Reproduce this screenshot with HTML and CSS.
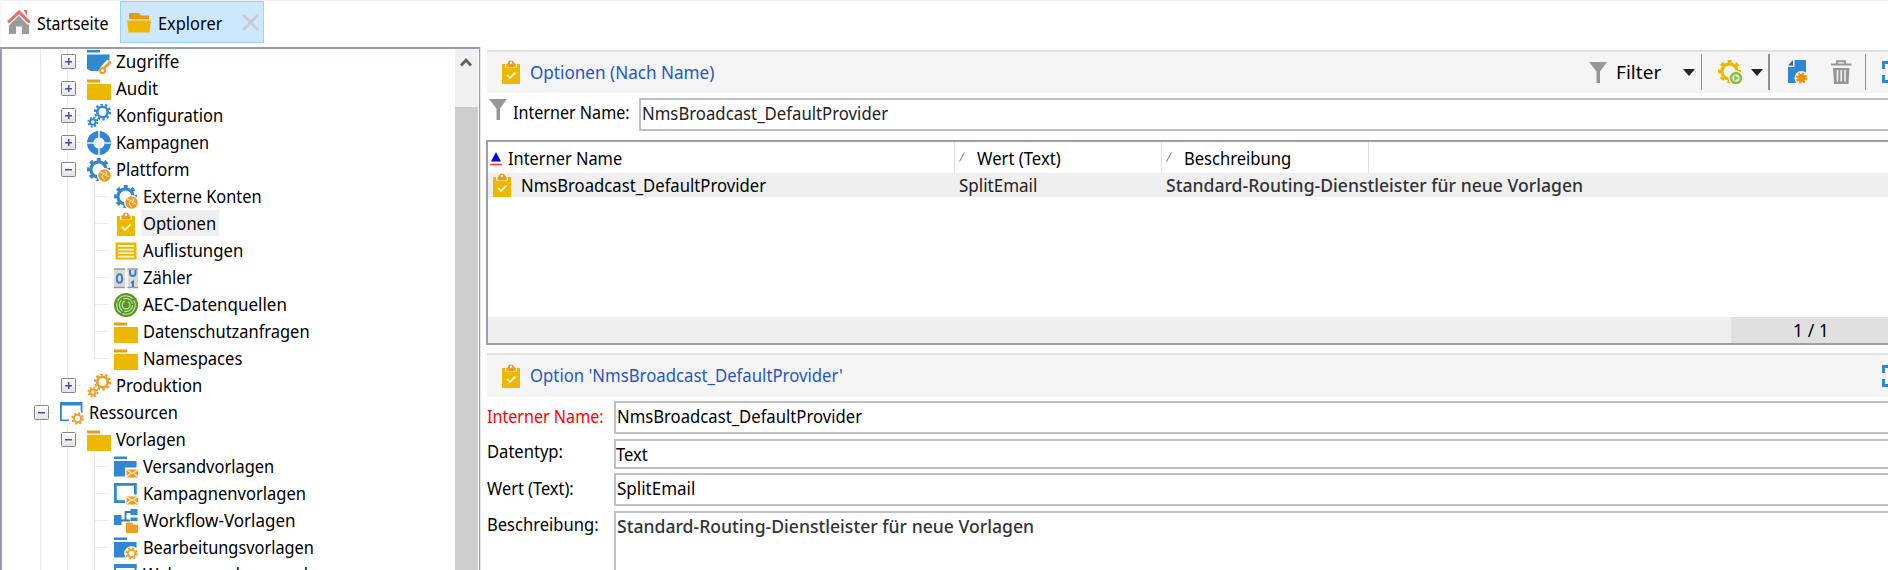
FILE: index.html
```html
<!DOCTYPE html>
<html lang="de">
<head>
<meta charset="utf-8">
<title>Explorer</title>
<link rel="stylesheet" href="styles.css">
</head>
<body>
<svg class="sprite" aria-hidden="true">
  <symbol id="home" viewBox="0 0 24 24"><path d="M2 14 12 4.500 22 14V24H15V16.500H9V24H2Z" fill="#9b9b9b"/><path d="M0 13 12 1.500 23 13" fill="none" stroke="#fff" stroke-width="6"/><path d="M1 12.500 12 2 22.500 12.500" fill="none" stroke="#ea6a65" stroke-width="3"/><path d="M16.500 0H20V5.500Z" fill="#ea6a65"/></symbol>
  <symbol id="open-folder" viewBox="0 0 24 24"><path d="M2 3H12L14 5.500H22V9H2Z" fill="#ee9500"/><path d="M0 10.500H24L22.500 22.500H1.500Z" fill="#edb800"/></symbol>
  <symbol id="folder" viewBox="0 0 24 24"><path d="M0 2.500H13V5.500H0Z" fill="#f09a10"/><path d="M0 7H24V23H0Z" fill="#edb900"/></symbol>
  <symbol id="blue-folder" viewBox="0 0 24 24"><path d="M0 1.500H13V4H0ZM0 6H22.500V21.500H0Z" fill="#3087d3"/></symbol>
  <symbol id="access" viewBox="0 0 24 24"><path d="M0 0H13V2.500H0ZM0 4.500H22.500V10L11 21H4L0 19Z" fill="#3087d3"/><path d="M22.500 11.500 15 20" stroke="#fff" stroke-width="6"/><path d="M24 11.500 15.500 19.500" stroke="#f09a20" stroke-width="3"/><circle cx="15.500" cy="20.500" r="2.500" fill="#fff" stroke="#f09a20" stroke-width="2"/></symbol>
  <symbol id="gears" viewBox="0 0 24 24"><g fill="none"><g class="g1"><circle cx="15.500" cy="8" r="5.200" stroke-width="2.600"/><circle cx="15.500" cy="8" r="7.500" stroke-width="2.200" stroke-dasharray="2.500 2.210" /></g><g class="g2"><circle cx="5.800" cy="18" r="2.800" stroke-width="2"/><circle cx="5.800" cy="18" r="4.600" stroke-width="1.800" stroke-dasharray="1.900 1.713"/></g></g></symbol>
  <symbol id="ring" viewBox="0 0 24 24"><circle cx="12" cy="12" r="8.800" fill="none" stroke="#3087d3" stroke-width="6.400"/><path d="M12 0V24M0 12H24" stroke="#e4eef8" stroke-width="1.600"/></symbol>
  <symbol id="gear" viewBox="0 0 24 24"><g fill="none" stroke="currentColor"><circle cx="11.500" cy="11.500" r="7.600" stroke-width="3.200"/><circle cx="11.500" cy="11.500" r="10" stroke-width="3.200" stroke-dasharray="3.900 3.954" stroke-dashoffset="2"/></g></symbol>
  <symbol id="platform" viewBox="0 0 24 24"><use href="#gear" color="#3087d3"/><circle cx="17.500" cy="17.500" r="7.500" fill="#fff"/><circle cx="17.500" cy="17.500" r="6.200" fill="#ef9a1c"/><path d="M13 14 17 15.500 15 18.500 17.500 22M18.500 13 20 15 18 17 22 19" fill="none" stroke="#fbe0b4" stroke-width="1.200"/></symbol>
  <symbol id="clipboard" viewBox="0 0 24 24"><path d="M3 4H21V24H3Z" fill="#edb900"/><path d="M6 3.500H18V7.500H6Z" fill="#fff3d0"/><path d="M7.500 7V4.500C7.500 3.500 9 3.500 9 2.500 9.500-.200 14.500-.200 15 2.500 15 3.500 16.500 3.500 16.500 4.500V7Z" fill="#ef9a1c"/><circle cx="12" cy="3" r="1.200" fill="#fff"/><path d="M8 15 11 18 16.500 12.500" fill="none" stroke="#fff3c8" stroke-width="1.800"/></symbol>
  <symbol id="list" viewBox="0 0 24 24"><path d="M1.500 3.500H22.500V20.500H1.500Z" fill="#edb900"/><path d="M4 6H20V8H4ZM4 9.700H20V11.400H4ZM4 13.200H20V15H4ZM4 16.700H20V18.500H4Z" fill="#fff6d6"/></symbol>
  <symbol id="counter" viewBox="0 0 24 24"><path d="M0 3H11V22H0ZM13.500 3H24V22H13.500Z" fill="#d9d9d9"/><path d="M0 3H11M13.500 3H24M0 21.500H11M13.500 21.500H24" stroke="#999" stroke-width="1.400"/><g fill="none" stroke="#3a7fc0" stroke-width="2"><ellipse cx="5.500" cy="12.500" rx="2.600" ry="4.300"/><path d="M16 4V7C16 11 21.500 11 21.500 7V4M17 17 19 15.700V21"/></g></symbol>
  <symbol id="aec" viewBox="0 0 24 24"><circle cx="12" cy="12" r="12" fill="#55981d"/><g fill="none" stroke="#d2e6bf" stroke-width="1.100"><circle cx="12" cy="12" r="9.300" stroke-dasharray="18 2 12 1"/><circle cx="12" cy="12" r="6.600" stroke-dasharray="12 2"/><circle cx="12" cy="12" r="3.900" stroke-dasharray="17 3"/></g></symbol>
  <symbol id="small-gear" viewBox="0 0 24 24"><circle cx="17.500" cy="17.500" r="7.300" fill="#fff"/><g fill="none" stroke="#ef9f30"><circle cx="17.500" cy="17.500" r="3.700" stroke-width="2"/><circle cx="17.500" cy="17.500" r="5.300" stroke-width="1.900" stroke-dasharray="2.200 1.963"/></g></symbol>
  <symbol id="mail" viewBox="0 0 24 24"><path d="M11 12.500H24V24H11Z" fill="#fff"/><path d="M12.500 14.500H24V22.500H12.500Z" fill="#ef9a1c"/><path d="M12.500 14.500 18.200 18.500 24 14.500M12.500 22 16.500 18.500M24 22 20 18.500" fill="none" stroke="#fff0d0" stroke-width="1.100"/></symbol>
  <symbol id="resources" viewBox="0 0 24 24"><path d="M0 1H22.500V4.500H0ZM0 4H1.800V20H0ZM0 18.500H9V20H0ZM20.700 4H22.500V13H20.700Z" fill="#3087d3"/><use href="#small-gear"/></symbol>
  <symbol id="delivery" viewBox="0 0 24 24"><use href="#blue-folder"/><use href="#mail"/></symbol>
  <symbol id="campaign" viewBox="0 0 24 24"><path d="M1.400 2.400H21.400V19.600H1.400Z" fill="none" stroke="#3087d3" stroke-width="2.800"/><use href="#mail"/></symbol>
  <symbol id="workflow" viewBox="0 0 24 24"><path d="M0 6H7.500V16H0ZM16.500 0H23.500V6H16.500ZM16.500 8.500H23.500V12H16.500Z" fill="#3087d3"/><path d="M7 11.500H16M11.500 11V3H17" fill="none" stroke="#3f78ae" stroke-width="1.800"/><path d="M12 13.500H18L19 15.500H24V24H12Z" fill="#ef9f20"/></symbol>
  <symbol id="edit" viewBox="0 0 24 24"><use href="#blue-folder"/><use href="#small-gear"/></symbol>
  <symbol id="web" viewBox="0 0 24 24"><path d="M1 2H21.500V22H1Z" fill="#fff" stroke="#3087d3" stroke-width="2"/><path d="M0 1H22.500V5H0Z" fill="#3087d3"/><circle cx="17" cy="12" r="5" fill="#e2574c"/></symbol>
  <symbol id="funnel" viewBox="0 0 18 21"><path d="M0 0H18L11 9.500V21H7.500V9.500Z" fill="#979797"/></symbol>
  <symbol id="run" viewBox="0 0 24 24"><use href="#gear" color="#edb800"/><circle cx="18" cy="18" r="7.500" fill="#f5f5f5"/><circle cx="18" cy="18" r="4.900" fill="none" stroke="#84c340" stroke-width="2.600"/><path d="M16.300 15 20.800 18 16.300 21Z" fill="#84c340"/></symbol>
  <symbol id="new" viewBox="0 0 24 24"><path d="M8.500 0H20V23H2V7H8.500Z" fill="#3087d3"/><path d="M2 5.500 7 0V5.500Z" fill="#2b68a5"/><circle cx="15.500" cy="18" r="7" fill="#f5f5f5"/><circle cx="15.500" cy="18" r="4" fill="#f09000"/><circle cx="15.500" cy="18" r="4.600" fill="none" stroke="#f09000" stroke-width="2" stroke-dasharray="2 1.613"/></symbol>
  <symbol id="trash" viewBox="0 0 24 24"><path d="M2 4.500H22.500M8 4V1.200H16V4" fill="none" stroke="#979797" stroke-width="2"/><path d="M4 8H20.500L19.500 24H5Z" fill="#979797"/><path d="M8.500 10V21.500M12.200 10V21.500M16 10V21.500" stroke="#f5f5f5" stroke-width="1.500"/></symbol>
</svg>

<header class="tabs">
  <div class="tab"><svg class="ic"><use href="#home"/></svg><span class="t" style="--s:.888">Startseite</span></div>
  <div class="tab active"><svg class="ic"><use href="#open-folder"/></svg><span class="t" style="--s:.91">Explorer</span>
    <svg class="close" viewBox="0 0 16 16"><path d="M1 1 15 15M15 1 1 15" stroke="#c9cdd0" stroke-width="2.800"/></svg></div>
</header>

<main>
<nav class="tree">
  <div class="rows">
    <div class="row"><i class="v"></i><i class="v h plus"></i><svg class="ic"><use href="#access"/></svg><span class="t" style="--s:.945">Zugriffe</span></div>
    <div class="row"><i class="v"></i><i class="v h plus"></i><svg class="ic"><use href="#folder"/></svg><span class="t" style="--s:.94">Audit</span></div>
    <div class="row"><i class="v"></i><i class="v h plus"></i><svg class="ic blue"><use href="#gears"/></svg><span class="t">Konfiguration</span></div>
    <div class="row"><i class="v"></i><i class="v h plus"></i><svg class="ic"><use href="#ring"/></svg><span class="t" style="--s:.905">Kampagnen</span></div>
    <div class="row"><i class="v"></i><i class="v h minus"></i><svg class="ic"><use href="#platform"/></svg><span class="t">Plattform</span></div>
    <div class="row"><i class="v"></i><i class="v"></i><i class="v h"></i><svg class="ic"><use href="#platform"/></svg><span class="t" style="--s:.908">Externe Konten</span></div>
    <div class="row sel"><i class="v"></i><i class="v"></i><i class="v h"></i><svg class="ic"><use href="#clipboard"/></svg><span class="t">Optionen</span></div>
    <div class="row"><i class="v"></i><i class="v"></i><i class="v h"></i><svg class="ic"><use href="#list"/></svg><span class="t" style="--s:.93">Auflistungen</span></div>
    <div class="row"><i class="v"></i><i class="v"></i><i class="v h"></i><svg class="ic"><use href="#counter"/></svg><span class="t">Zähler</span></div>
    <div class="row"><i class="v"></i><i class="v"></i><i class="v h"></i><svg class="ic"><use href="#aec"/></svg><span class="t" style="--s:.943">AEC-Datenquellen</span></div>
    <div class="row"><i class="v"></i><i class="v"></i><i class="v h"></i><svg class="ic"><use href="#folder"/></svg><span class="t" style="--s:.913">Datenschutzanfragen</span></div>
    <div class="row"><i class="v"></i><i class="v"></i><i class="v h last"></i><svg class="ic"><use href="#folder"/></svg><span class="t">Namespaces</span></div>
    <div class="row"><i class="v"></i><i class="v h plus last"></i><svg class="ic orange"><use href="#gears"/></svg><span class="t">Produktion</span></div>
    <div class="row"><i class="v h minus"></i><svg class="ic"><use href="#resources"/></svg><span class="t" style="--s:.91">Ressourcen</span></div>
    <div class="row"><i class="v"></i><i class="v h minus"></i><svg class="ic"><use href="#folder"/></svg><span class="t">Vorlagen</span></div>
    <div class="row"><i class="v"></i><i class="v"></i><i class="v h"></i><svg class="ic"><use href="#delivery"/></svg><span class="t" style="--s:.915">Versandvorlagen</span></div>
    <div class="row"><i class="v"></i><i class="v"></i><i class="v h"></i><svg class="ic"><use href="#campaign"/></svg><span class="t">Kampagnenvorlagen</span></div>
    <div class="row"><i class="v"></i><i class="v"></i><i class="v h"></i><svg class="ic"><use href="#workflow"/></svg><span class="t" style="--s:.945">Workflow-Vorlagen</span></div>
    <div class="row"><i class="v"></i><i class="v"></i><i class="v h"></i><svg class="ic"><use href="#edit"/></svg><span class="t" style="--s:.908">Bearbeitungsvorlagen</span></div>
    <div class="row"><i class="v"></i><i class="v"></i><i class="v h"></i><svg class="ic"><use href="#web"/></svg><span class="t">Webanwendungsvorl.</span></div>
  </div>
  <div class="scroll"><svg class="up" viewBox="0 0 12 9"><path d="M1 8 6 2.500 11 8" fill="none" stroke="#606060" stroke-width="2.800"/></svg><div class="thumb"></div></div>
</nav>

<section class="content">
  <div class="bar">
    <svg class="ic"><use href="#clipboard"/></svg><span class="t title" style="--s:.95">Optionen (Nach Name)</span>
    <div class="tools">
      <svg class="funnel"><use href="#funnel"/></svg><span class="t filter" style="--s:1.06">Filter</span><b class="caret c1"></b><b class="sep s1"></b>
      <svg class="ic run"><use href="#run"/></svg><b class="caret c2"></b><b class="sep s2"></b>
      <svg class="ic new"><use href="#new"/></svg><svg class="ic trash"><use href="#trash"/></svg><b class="sep s3"></b><b class="max"></b>
    </div>
  </div>
  <div class="search">
    <svg class="funnel"><use href="#funnel"/></svg><span class="t lbl" style="--s:.895">Interner Name:</span>
    <div class="field"><span class="t soft" style="--s:.93">NmsBroadcast_DefaultProvider</span></div>
  </div>
  <div class="table">
    <div class="thead">
      <div class="th c-name"><svg class="sort" viewBox="0 0 12 14"><path d="M6 0 11 9.500H1Z" fill="#00f"/><path d="M0 12.500H12" stroke="#f33" stroke-width="1.500"/></svg><span class="t" style="--s:.91">Interner Name</span></div>
      <div class="th c-val"><svg class="slash" viewBox="0 0 6 10"><path d="M.500 9.500 5.500.500" stroke="#777"/></svg><span class="t" style="--s:.925">Wert (Text)</span></div>
      <div class="th c-val"><svg class="slash" viewBox="0 0 6 10"><path d="M.500 9.500 5.500.500" stroke="#777"/></svg><span class="t">Beschreibung</span></div>
    </div>
    <div class="tr">
      <div class="td c-name"><svg class="ic"><use href="#clipboard"/></svg><span class="t" style="--s:.926">NmsBroadcast_DefaultProvider</span></div>
      <div class="td c-val"><span class="t soft" style="--s:.945">SplitEmail</span></div>
      <div class="td"><span class="t desc">Standard-Routing-Dienstleister für neue Vorlagen</span></div>
    </div>
    <div class="tfoot"><div class="count"><span class="t" style="--s:.98">1 / 1</span></div></div>
  </div>
  <div class="bar second">
    <svg class="ic"><use href="#clipboard"/></svg><span class="t title" style="--s:.93">Option 'NmsBroadcast_DefaultProvider'</span>
    <div class="tools"><b class="max"></b></div>
  </div>
  <div class="form">
    <div class="line l1"><span class="t lbl req" style="--s:.895">Interner Name:</span><div class="field"><span class="t" style="--s:.926">NmsBroadcast_DefaultProvider</span></div></div>
    <div class="line l2"><span class="t lbl">Datentyp:</span><div class="field"><span class="t">Text</span></div></div>
    <div class="line l3"><span class="t lbl" style="--s:.91">Wert (Text):</span><div class="field"><span class="t" style="--s:.945">SplitEmail</span></div></div>
    <div class="line l4"><span class="t lbl">Beschreibung:</span><div class="field"><span class="t desc">Standard-Routing-Dienstleister für neue Vorlagen</span></div></div>
  </div>
</section>
</main>
</body>
</html>
```
FILE: styles.css
```css
* { box-sizing: border-box; }
body {
  margin: 0;
  width: 1888px;
  height: 570px;
  overflow: hidden;
  display: flex;
  flex-direction: column;
  background: #fff;
  color: #000;
  font: 18px/26px "Noto Sans", "Open Sans", sans-serif;
}
.sprite { position: absolute; width: 0; height: 0; }
svg { flex: none; }
.ic { width: 24px; height: 24px; }

/* labels are slightly condensed; --s is the horizontal ratio */
.t {
  display: inline-block;
  flex: none;
  white-space: pre;
  transform-origin: 0 50%;
  transform: scaleX(var(--s, .92));
}
.soft { color: #222; }
.desc { --s: .978; color: #333; font-weight: 500; }

/* tabs */
.tabs {
  flex: none;
  height: 47px;
  display: flex;
  align-items: flex-start;
  padding-top: 1px;
  box-shadow: inset 2px 0 #f7f7f7, inset 0 1px #f0f0f0;
}
.tab { display: flex; align-items: center; height: 42px; width: 120px; padding: 1px 0 0 7px; }
.tab .ic { margin-top: -1px; }
.tab .t { margin-left: 6px; }
.tab.active { width: 144px; background: #cce8ff; border: 1px solid #99d1ff; padding: 1px 0 0 6px; }
.tab.active .t { width: 71px; margin-left: 7px; }
.close { width: 17px; height: 17px; margin: 0 0 0 13px; }

main { flex: 1; min-height: 0; display: flex; }

/* navigation tree */
.tree {
  width: 480px;
  flex: none;
  display: flex;
  border: solid #989ea9;
  border-width: 2px 1px 0 2px;
  overflow: hidden;
}
.rows { flex: 1; margin-top: -1px; padding-left: 25px; }
.row { height: 27.03px; display: flex; align-items: center; }
.row .ic { margin-left: 6px; }
.row .t { margin-left: 5px; margin-top: -1px; }
.v { width: 27px; align-self: stretch; position: relative; flex: none; }
.v::before { content: ""; position: absolute; left: 13px; top: 0; bottom: 0; width: 1px; background: #e9e9e9; }
.v.last::before { bottom: 50%; }
.v.h {
  background: linear-gradient(#e9e9e9, #e9e9e9) 13px 50% / 14px 1px no-repeat;
}
.plus::after, .minus::after {
  content: "";
  position: absolute;
  left: 7px;
  top: 6px;
  width: 13px;
  height: 13px;
  border: 1px solid #858585;
  border-radius: 1.500px;
  background:
    linear-gradient(#3f55a5, #3f55a5) center / 7px 1.500px no-repeat,
    linear-gradient(#3f55a5, #3f55a5) center / 1.500px 7px no-repeat,
    linear-gradient(#fff, #e2e2e2);
}
.minus::after { background: linear-gradient(#3f55a5, #3f55a5) center / 7px 1.500px no-repeat, linear-gradient(#fff, #e2e2e2); }
.row.sel .t { background: #efefef; box-shadow: -2px 0 #efefef, 3px 0 #efefef; }
.blue { color: #3087d3; }
.orange { color: #ef9a1c; }
.g1, .g2 { stroke: currentColor; }
.scroll { width: 24px; background: #f0f0f0; display: flex; flex-direction: column; border-right: 1px solid #fff; }
.up { width: 12px; height: 10px; margin: 8px 0 0 5px; }
.thumb { flex: 1; margin-top: 40px; background: #cdcdcd; }

/* content */
.content { flex: 1; min-width: 0; padding: 3px 0 0 6px; border-left: 1px solid #e6e6e6; display: flex; flex-direction: column; overflow: hidden; }
.bar { height: 43px; flex: none; display: flex; align-items: center; background: #f5f5f5; border-top: 2px solid #e1e1e1; padding: 0 0 1px 12px; }
.bar .title { margin-left: 7px; margin-top: -1px; color: #2455cc; }
.tools { margin-left: auto; display: flex; align-items: center; }
.funnel { width: 18px; height: 21px; }
.filter { width: 50px; margin-left: 9px; }
.caret { border: solid transparent; border-width: 7px 6px 0; border-top-color: #222; }
.c1 { margin-left: 17px; }
.c2 { margin-left: 9px; }
.sep { width: 1.500px; height: 36px; background: #909090; }
.s1 { margin-left: 6px; }
.run { margin-left: 16px; }
.s2 { margin-left: 5px; }
.new { margin-left: 16px; }
.trash { margin-left: 19px; }
.s3 { margin-left: 12px; }
.max {
  width: 6px;
  height: 22px;
  margin-left: 16px;
  background:
    linear-gradient(#3087d3, #3087d3) 0 0 / 6px 3px no-repeat,
    linear-gradient(#3087d3, #3087d3) 0 0 / 3px 8px no-repeat,
    linear-gradient(#3087d3, #3087d3) 0 100% / 6px 3px no-repeat,
    linear-gradient(#3087d3, #3087d3) 0 100% / 3px 8px no-repeat;
}
.search { height: 47px; flex: none; padding: 5px 0 0 2px; display: flex; align-items: flex-start; }
.search .funnel { margin-top: 1px; }
.search .lbl { margin: 1px 0 0 6px; width: 125.500px; }
.field { flex: 1; align-self: stretch; border: 2px solid #bfbfc6; border-right: 0; padding-left: 1px; }
.search .field { height: 33px; flex: 1; align-self: auto; }
.search .field .t { margin-top: -1px; }

.table { height: 205px; flex: none; margin-left: -1px; border: 2px solid #9b9fa8; border-right: 0; display: flex; flex-direction: column; }
.thead { height: 31px; flex: none; display: flex; }
.th { display: flex; align-items: center; border-right: 1px solid #e2e2e2; padding: 1px 0 0 3px; }
.sort { width: 12px; height: 14px; margin: 1px 0 0 -1px; }
.sort + .t { margin-left: 6px; }
.c-name { width: 467px; }
.c-val { width: 207px; }
.slash { width: 6px; height: 10px; margin: -3px 12px 0 1px; }
.tr { height: 24px; flex: none; background: #efefef; display: flex; }
.td { display: flex; align-items: center; padding-left: 4px; }
.td .t { margin-top: -1px; }
.td.c-name { padding-left: 2px; }
.td .ic { margin-top: -1px; }
.td .ic + .t { margin-left: 7px; }
.tfoot { margin-top: auto; height: 26px; background: #efefef; display: flex; }
.count { margin-left: auto; width: 157px; background: #e0e0e0; padding-left: 62px; }

.second { margin-top: 8px; height: 44px; }
.form { flex: 1; display: flex; flex-direction: column; }
.line { flex: none; display: flex; margin-top: 4px; }
.line .lbl { width: 127px; margin-top: 2px; }
.l1 { height: 33px; }
.l2 { height: 30px; margin-top: 5px; }
.l2 .lbl { margin-top: -1px; }
.l2 .field { padding-left: 0; }
.l2 .field .t { margin-top: -1px; }
.l3 { height: 33px; }
.l4 { height: 80px; margin-top: 5px; }
.l4 .lbl { margin-top: 0; }
.l4 .field .t { margin-top: -1px; }
.req { color: #f00; }
```
